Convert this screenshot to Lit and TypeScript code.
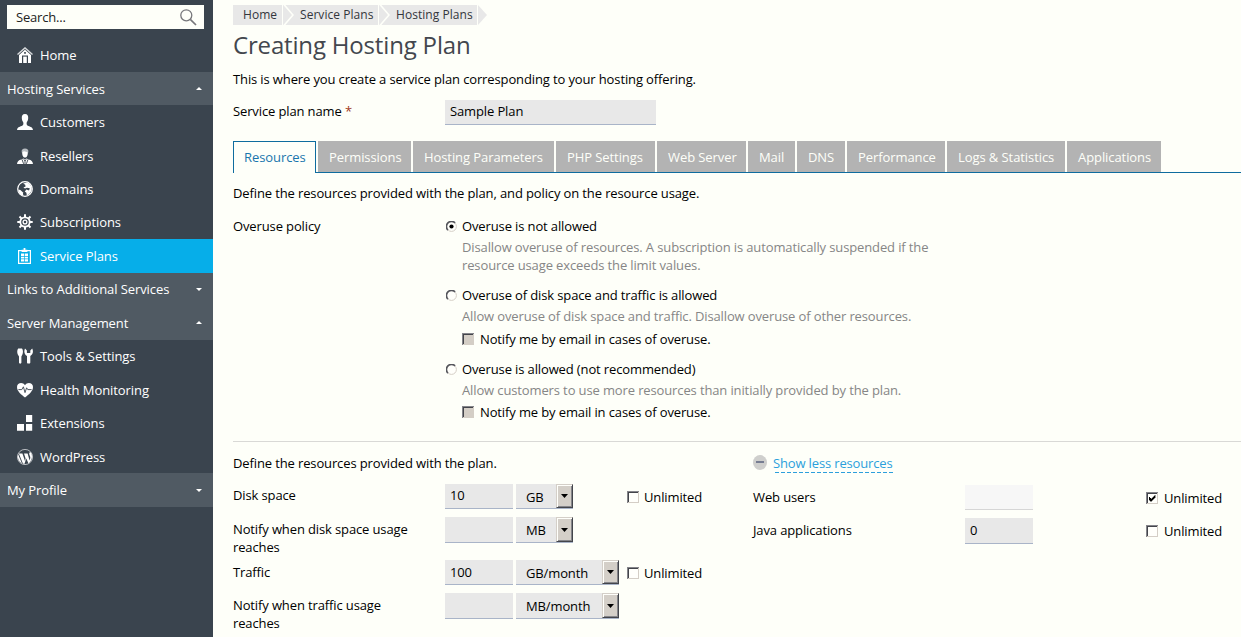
import { LitElement, html, css, svg, nothing } from "lit";
import { customElement, property } from "lit/decorators.js";
import { classMap } from "lit/directives/class-map.js";

const icons: Record<string, unknown> = {
  home: svg`
    <path d="M0.5 7.6 L8 0.9 L15.5 7.6" fill="none" stroke="#d5d8da" stroke-width="1.4"/>
    <path d="M2 8 L8 2.8 L14 8 V16 H11 V8.6 H5 V16 H2 Z" fill="#fff"/>
    <path d="M6.2 9.6 H9.8 V16 H6.2 Z" fill="#fff"/>
    <rect x="7.2" y="5" width="1.6" height="1.8" fill="#3a444e"/>`,
  user: svg`<path d="M8 0 C10.6 0 11.3 1.9 11.2 4 C11.1 6.3 10.4 7.4 9.7 8.4 C9.4 10.3 9.8 11.2 11.4 11.9 C14 12.9 15.4 13 16 16 H0 C0.6 13 2 12.9 4.6 11.9 C6.2 11.2 6.6 10.3 6.3 8.4 C5.6 7.4 4.9 6.3 4.8 4 C4.7 1.9 5.4 0 8 0 Z" fill="#fff"/>`,
  reseller: svg`
    <path d="M4.7 4.4 C4.3 1.6 5.6 0.5 8 0.5 C10.4 0.5 11.7 1.6 11.3 4.4 Z" fill="#b9bec2"/>
    <path d="M5.2 4.2 L7 3.2 L10.8 4.2 C11 7 9.8 9.6 8 9.6 C6.2 9.6 5 7 5.2 4.2 Z" fill="#fff"/>
    <path d="M0 16 C0.3 13.1 1.6 12 4.4 11.4 L6.4 10.6 L8 11.6 L9.6 10.6 L11.6 11.4 C14.4 12 15.7 13.1 16 16 Z" fill="#fff"/>
    <path d="M5 11.4 L6.6 15.8 M11 11.4 L9.4 15.8 M6.8 11.4 L8 13 L9.2 11.4 M8 13 V16" stroke="#3a444e" stroke-width="0.9" fill="none"/>`,
  globe: svg`
    <circle cx="8" cy="8" r="7.3" fill="none" stroke="#fff" stroke-width="1.2"/>
    <path d="M6.2 2.6 L10 1.4 C13 2.2 14.8 5 14.8 8 C14.5 11.5 12 13.6 9.8 14.4 L9.4 11.8 L7.8 10.4 L9.4 8.6 L12 9.4 L12.8 7.2 L10 6.8 L8 7.6 L6.4 6.6 L8.6 5.4 L8.2 3.8 Z" fill="#fff"/>
    <path d="M1.2 8.4 L3.4 9 L5.8 11.2 L6.4 14.8 C3.4 14 1.4 11.4 1.2 8.4 Z" fill="#fff"/>`,
  gear: svg`
    <circle cx="8" cy="8" r="4.7" fill="none" stroke="#fff" stroke-width="1.8"/>
    <circle cx="8" cy="8" r="1.9" fill="none" stroke="#fff" stroke-width="1.3"/>
    <path d="M8 0.3 V3 M8 13 V15.7 M0.3 8 H3 M13 8 H15.7 M2.5 2.5 L4.6 4.6 M11.4 11.4 L13.5 13.5 M13.5 2.5 L11.4 4.6 M4.6 11.4 L2.5 13.5" stroke="#fff" stroke-width="2"/>`,
  plan: svg`
    <rect x="1.6" y="2.6" width="11.8" height="12.8" fill="none" stroke="#fff" stroke-width="1.2"/>
    <path d="M4.6 1.8 H6.6 V0 H8.4 V1.8 H10.4 V4 H4.6 Z" fill="#fff"/>
    <path d="M4 5.6 H7.2 V8.2 H4 Z M7.9 5.6 H11 V8.2 H7.9 Z M4 9 H7.2 V10.6 H4 Z M7.9 9 H11 V10.6 H7.9 Z M4 11.2 H7.2 V13.4 H4 Z M7.9 11.2 H11 V13.4 H7.9 Z" fill="#fff"/>`,
  tools: svg`
    <path d="M1.2 0.6 H5 C6.2 2 6.2 4.6 5.4 6.6 L4.4 8.6 V14.6 C4.4 16 2 16 2 14.6 V8.6 L0.8 6.6 C0 4.6 0 2 1.2 0.6 Z" fill="#fff"/>
    <path d="M8 0.6 L9.9 2.6 V5 H13.3 V2.6 L15.2 0.6 C16.6 3.4 16 6.2 13.3 8 V14.4 C13.3 16 10 16 10 14.4 V8 C7.3 6.2 6.7 3.4 8 0.6 Z" fill="#fff"/>`,
  heart: svg`
    <path d="M8 15.6 C4.6 12.6 0 9.6 0 5 C0 0.6 5.8 -0.6 8 3.2 C10.2 -0.6 16 0.6 16 5 C16 9.6 11.4 12.6 8 15.6 Z" fill="#fff"/>
    <path d="M1.4 7.6 H4.8 L6.4 4.8 L8 10.6 L9.6 5.8 L10.8 7.6 H14.6" fill="none" stroke="#3a444e" stroke-width="0.9"/>`,
  blocks: svg`<path d="M9 0 H15.2 V7 H9 Z M0 9 H7 V15.8 H0 Z M9 9 H15.2 V15.8 H9 Z" fill="#fff"/>`,
  wordpress: svg`
    <circle cx="8" cy="8" r="7.6" fill="none" stroke="#d5d8da" stroke-width="0.8"/>
    <path d="M1.8 4.4 H5.4 L8 12 L8.6 9.6 L7 4.4 H10.6 L12.6 11.4 L13.3 9 C13.6 7.2 12 6 12.2 4.2 C12.4 3 13.6 2.8 14.2 4 C15.8 7.4 15 11.4 12 13.9 L11.4 14.2 L9.3 9.4 L7.4 15 L5.9 14.6 Z" fill="#fff"/>
    <path d="M1.2 5.6 L5 14.4 C1.6 12.8 0.2 9 1.2 5.6 Z" fill="#fff"/>`,
};

interface NavEntry {
  label: string;
  icon?: string;
  group?: "open" | "closed";
  active?: boolean;
}

const nav: NavEntry[] = [
  { label: "Home", icon: "home" },
  { label: "Hosting Services", group: "open" },
  { label: "Customers", icon: "user" },
  { label: "Resellers", icon: "reseller" },
  { label: "Domains", icon: "globe" },
  { label: "Subscriptions", icon: "gear" },
  { label: "Service Plans", icon: "plan", active: true },
  { label: "Links to Additional Services", group: "closed" },
  { label: "Server Management", group: "open" },
  { label: "Tools & Settings", icon: "tools" },
  { label: "Health Monitoring", icon: "heart" },
  { label: "Extensions", icon: "blocks" },
  { label: "WordPress", icon: "wordpress" },
  { label: "My Profile", group: "closed" },
];

const tabs: [string, number][] = [
  ["Resources", 83],
  ["Permissions", 93],
  ["Hosting Parameters", 141],
  ["PHP Settings", 99],
  ["Web Server", 89],
  ["Mail", 47],
  ["DNS", 48],
  ["Performance", 98],
  ["Logs & Statistics", 118],
  ["Applications", 94],
];

@customElement("side-nav")
class SideNav extends LitElement {
  static styles = css`
    :host { display: block; width: 213px; height: 637px; background: #3a444e; color: #fff; letter-spacing: -0.08px; }
    .search {
      display: flex; align-items: center; justify-content: space-between; box-sizing: border-box;
      width: 197px; height: 24px; margin: 0 0 9.5px 7px; padding: 0 7px 0 9px;
      background: #fefff9; color: #222; letter-spacing: -0.2px;
    }
    .wrap { padding-top: 5px; }
    .row { display: flex; align-items: center; height: 33.46px; padding-left: 17px; box-sizing: border-box; }
    .row svg { width: 16px; height: 16px; margin-right: 7px; flex: none; }
    .group { background: #505a63; padding: 0 11px 0 7px; justify-content: space-between; }
    .active { background: #06aee9; }
    .caret { width: 0; height: 0; border: 3px solid transparent; }
    .open { border-top: 0; border-bottom-color: #fff; }
    .closed { border-bottom: 0; border-top-color: #fff; }
  `;
  render() {
    return html`<div class="wrap">
      <div class="search">
        <span>Search...</span>
        <svg width="17" height="17" viewBox="0 0 17 17" fill="none" stroke="#77777b">
          <circle cx="6.3" cy="6.3" r="5.5" stroke-width="1.3" />
          <path d="M10.3 10.3 L16 16" stroke-width="1.7" />
        </svg>
      </div>
      ${nav.map((n) =>
        n.group
          ? html`<div class="row group"><span>${n.label}</span><i class="caret ${n.group}"></i></div>`
          : html`<div class=${classMap({ row: true, active: !!n.active })}>
              <svg viewBox="0 0 16 16">${icons[n.icon!]}</svg><span>${n.label}</span>
            </div>`
      )}
    </div>`;
  }
}

@customElement("check-box")
class CheckBox extends LitElement {
  @property() label = "";
  @property({ type: Boolean }) checked = false;
  @property({ type: Boolean }) disabled = false;
  static styles = css`
    :host { display: flex; align-items: center; height: 18px; gap: 6px; white-space: nowrap; }
    svg { flex: none; }
  `;
  render() {
    return html`<svg width="12" height="12" viewBox="0 0 12 12" shape-rendering="crispEdges">
        <rect width="12" height="12" fill=${this.disabled ? "#d4cec6" : "#fffffb"} />
        <path d="M11.5 0 V11.5 H0" fill="none" stroke="#d4cec6" />
        <path d="M0.5 12 V0.5 H12" fill="none" stroke="#85858a" />
        <path d="M1.5 11 V1.5 H11" fill="none" stroke="#43454b" />
        ${this.checked
          ? svg`<path d="M3 5 L5 7 L9 3 V5.6 L5 9.6 L3 7.6 Z" fill="#000" stroke="#000" stroke-width="0.4"/>`
          : nothing}</svg
      ><span>${this.label}</span>`;
  }
}

@customElement("radio-dot")
class RadioDot extends LitElement {
  @property({ type: Boolean }) checked = false;
  static styles = css`
    :host { display: block; width: 11px; height: 11px; }
    svg { display: block; }
  `;
  render() {
    return html`<svg width="11" height="11" viewBox="0 0 11 11" fill="none">
      <circle cx="5.5" cy="5.5" r="4.9" fill="#fffffb" stroke="#d4cec6" />
      <path d="M1.9 9.1 A5 5 0 0 1 9.1 1.9" stroke="#55565c" stroke-width="1.6" />
      ${this.checked ? svg`<circle cx="5.5" cy="5.5" r="2.1" fill="#000"/>` : nothing}
    </svg>`;
  }
}

@customElement("unit-select")
class UnitSelect extends LitElement {
  @property() value = "";
  static styles = css`
    :host {
      display: flex; justify-content: space-between; box-sizing: border-box; height: 25px;
      background: #e8e8e8; border-bottom: 1px solid #a9b4c8; padding-left: 10px; line-height: 26px;
    }
    .btn {
      display: flex; align-items: center; justify-content: center; box-sizing: border-box;
      width: 17px; height: 100%; background: #d4cfc8; border: 1px solid;
      border-color: #d4cfc8 #43454b #43454b #d4cfc8;
      box-shadow: inset 1px 1px #fffffb, inset -1px -1px #85858a;
    }
  `;
  render() {
    return html`<span>${this.value}</span
      ><span class="btn"><svg width="7" height="4" viewBox="0 0 7 4"><path d="M0 0 H7 L3.5 4 Z" fill="#000" /></svg></span>`;
  }
}

@customElement("app-root")
class AppRoot extends LitElement {
  static styles = css`
    :host {
      display: flex; width: 1241px; height: 637px; overflow: hidden; background: #fefff9; color: #000;
      font-family: "Open Sans", "Noto Sans", sans-serif; font-size: 13px; line-height: 18px;
    }
    side-nav { flex: none; }
    main { flex: 1; min-width: 0; padding: 5px 0 0 20px; letter-spacing: -0.125px; }
    .crumbs { display: flex; height: 20px; line-height: 20px; color: #33363c; font-size: 12px; letter-spacing: 0.05px; }
    .crumb { box-sizing: border-box; background: #e8e8e8; padding-left: 6px; white-space: nowrap; }
    .c0 { width: 49px; padding-left: 10px; }
    .c1 { width: 84px; }
    .c2 { width: 87px; }
    h1 { margin: 3px 0 0; font-size: 24px; line-height: 34px; font-weight: 400; color: #43474e; letter-spacing: -0.17px; }
    .intro { margin-top: 8px; }
    .name { display: grid; grid-template-columns: 212px 211px; margin-top: 12px; }
    .name label { padding-top: 2px; }
    .req { color: #a23a1c; }
    .field {
      box-sizing: border-box; height: 25px; padding-left: 5px; line-height: 22px;
      background: #e8e8e8; border-bottom: 1px solid #a9b4c8;
    }
    .off { background: #f7f7f7; border-color: #d6d6d6; }
    .tabs {
      display: flex; gap: 2px; margin-top: 16px; height: 32px; box-sizing: border-box;
      box-shadow: inset 0 -1px #0f6c9f; letter-spacing: -0.08px;
    }
    .tab {
      box-sizing: border-box; height: 31px; line-height: 32px; padding-left: 11px;
      white-space: nowrap; background: #b3b3b3; color: #fefff9;
    }
    .tab.on {
      height: 32px; line-height: 31px; padding-left: 10px; background: #fefff9; color: #1a76ad;
      border: 1px solid #0f6c9f; border-bottom: 0;
    }
    .lead { margin-top: 11px; }
    .policy { display: grid; grid-template-columns: 213px 1fr; margin-top: 15px; height: 225px; box-sizing: border-box; border-bottom: 1px solid #d9d9d6; }
    .opt { display: grid; grid-template-columns: 16px 480px; margin-bottom: 12px; }
    .opt radio-dot { margin-top: 4px; }
    .desc { color: #868686; margin-top: 3px; }
    .opt check-box { margin-top: 5px; }
    .opt:last-child check-box { margin-top: 4px; }
    .res { display: grid; grid-template-columns: 520px 1fr; margin-top: 12px; }
    .line { display: grid; grid-template-columns: 212px 68px 111px 1fr; height: 33px; }
    .tall { height: 43px; }
    .tall .field, .tall unit-select { height: 26px; }
    .left { padding-top: 12px; }
    .left .line label { padding: 2px 20px 0 0; }
    .left .line.tall label, .left .tall + .line label { padding-top: 3px; }
    .left .tall + .line .field { line-height: 24px; }
    .line unit-select { margin-left: 3px; justify-self: start; }
    .line check-box { margin: 4px 0 0 3px; }
    .left .line check-box { gap: 5px; }
    .small { width: 57px; }
    .wide { width: 103px; }
    .more { display: flex; gap: 6px; color: #2c9fdc; height: 18px; letter-spacing: -0.15px; }
    .more svg { margin-top: 1px; }
    .more span { height: 19px; background: repeating-linear-gradient(90deg, #2c9fdc 0 4px, transparent 4px 6px) 2px 100% / 100% 1px no-repeat; }
    .right { padding-top: 13px; }
    .right .line { grid-template-columns: 212px 68px 110px 1fr; }
    .right .line label { padding-top: 3px; }
    .right .line check-box { grid-column: 4; }
    .right .line + .line .field { height: 26px; line-height: 24px; }
  `;

  private arrow(last = false) {
    return html`<svg width=${last ? 10 : 12} height="20" viewBox=${last ? "0 0 10 20" : "0 0 12 20"}>
      ${last
        ? svg`<path d="M1 0 L10 10 L1 20 Z" fill="#e8e8e8"/>`
        : svg`<rect width="12" height="20" fill="#e8e8e8"/><path d="M0.5 0 V20" stroke="#fefff9"/>
            <path d="M1.5 -1 L11 10 L1.5 21" fill="none" stroke="#fefff9" stroke-width="1.6"/>`}
    </svg>`;
  }

  private line(label: string, value: string, unit: string, size: string, unlimited: boolean, tall: boolean) {
    return html`<div class=${classMap({ line: true, tall })}>
      <label>${label}</label>
      <div class="field">${value}</div>
      <unit-select class=${size} .value=${unit}></unit-select>
      ${unlimited ? html`<check-box label="Unlimited"></check-box>` : nothing}
    </div>`;
  }

  render() {
    return html`
      <side-nav></side-nav>
      <main>
        <div class="crumbs">
          <span class="crumb c0">Home</span>${this.arrow()}
          <span class="crumb c1">Service Plans</span>${this.arrow()}
          <span class="crumb c2">Hosting Plans</span>${this.arrow(true)}
        </div>
        <h1>Creating Hosting Plan</h1>
        <div class="intro">This is where you create a service plan corresponding to your hosting offering.</div>
        <div class="name">
          <label>Service plan name <span class="req">*</span></label>
          <div class="field">Sample Plan</div>
        </div>
        <div class="tabs">
          ${tabs.map(
            ([t, w], i) => html`<div class=${classMap({ tab: true, on: i === 0 })} style="width:${w}px">${t}</div>`
          )}
        </div>
        <div class="lead">Define the resources provided with the plan, and policy on the resource usage.</div>
        <div class="policy">
          <span>Overuse policy</span>
          <div>
            <div class="opt">
              <radio-dot checked></radio-dot>
              <div>
                Overuse is not allowed
                <div class="desc">
                  Disallow overuse of resources. A subscription is automatically suspended if the resource usage exceeds
                  the limit values.
                </div>
              </div>
            </div>
            <div class="opt">
              <radio-dot></radio-dot>
              <div>
                Overuse of disk space and traffic is allowed
                <div class="desc">Allow overuse of disk space and traffic. Disallow overuse of other resources.</div>
                <check-box disabled label="Notify me by email in cases of overuse."></check-box>
              </div>
            </div>
            <div class="opt">
              <radio-dot></radio-dot>
              <div>
                Overuse is allowed (not recommended)
                <div class="desc">Allow customers to use more resources than initially provided by the plan.</div>
                <check-box disabled label="Notify me by email in cases of overuse."></check-box>
              </div>
            </div>
          </div>
        </div>
        <div class="res">
          <div>
            <span>Define the resources provided with the plan.</span>
            <div class="left">
              ${this.line("Disk space", "10", "GB", "small", true, false)}
              ${this.line("Notify when disk space usage reaches", "", "MB", "small", false, true)}
              ${this.line("Traffic", "100", "GB/month", "wide", true, false)}
              ${this.line("Notify when traffic usage reaches", "", "MB/month", "wide", false, true)}
            </div>
          </div>
          <div>
            <div class="more">
              <svg width="14" height="15" viewBox="0 0 14 15">
                <ellipse cx="7" cy="7.5" rx="7" ry="7.4" fill="#cfcfcd" />
                <rect x="3" y="6" width="8" height="2" fill="#777d92" />
              </svg>
              <span>Show less resources</span>
            </div>
            <div class="right">
              <div class="line">
                <label>Web users</label>
                <div class="field off"></div>
                <check-box checked label="Unlimited"></check-box>
              </div>
              <div class="line">
                <label>Java applications</label>
                <div class="field">0</div>
                <check-box label="Unlimited"></check-box>
              </div>
            </div>
          </div>
        </div>
      </main>
    `;
  }
}
